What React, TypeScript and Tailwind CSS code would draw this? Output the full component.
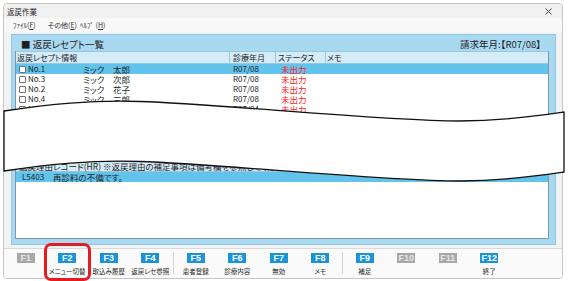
import React from "react";

type Row = { no: string; sei: string; mei: string; ym: string; st: string; sel?: boolean };

const rows: Row[] = [
  { no: "No.1", sei: "ミック", mei: "太郎", ym: "R07/08", st: "未出力", sel: true },
  { no: "No.3", sei: "ミック", mei: "次郎", ym: "R07/08", st: "未出力" },
  { no: "No.2", sei: "ミック", mei: "花子", ym: "R07/08", st: "未出力" },
  { no: "No.4", sei: "ミック", mei: "三郎", ym: "R07/08", st: "未出力" },
  { no: "No.5", sei: "ミック", mei: "四郎", ym: "R07/04", st: "未出力" },
  { no: "No.6", sei: "ミック", mei: "五郎", ym: "R07/04", st: "未出力" },
  { no: "No.7", sei: "ミック", mei: "六郎", ym: "R07/04", st: "未出力" },
  { no: "No.8", sei: "ミック", mei: "七郎", ym: "R07/04", st: "未出力" },
  { no: "No.9", sei: "ミック", mei: "八郎", ym: "R07/04", st: "未出力" },
];

type Key = { k: string; label?: string; on: boolean } | "sep1" | "sep2";

const keys: Key[] = [
  { k: "F1", on: false },
  { k: "F2", label: "メニュー切替", on: true },
  { k: "F3", label: "取込み履歴", on: true },
  { k: "F4", label: "返戻レセ参照", on: true },
  "sep1",
  { k: "F5", label: "患者登録", on: true },
  { k: "F6", label: "診療内容", on: true },
  { k: "F7", label: "無効", on: true },
  { k: "F8", label: "メモ", on: true },
  "sep2",
  { k: "F9", label: "補足", on: true },
  { k: "F10", on: false },
  { k: "F11", on: false },
  { k: "F12", label: "終了", on: true },
];

function Check() {
  return <div className="w-[7px] h-[7px] shrink-0 border border-[#707070] bg-white rounded-[1px]" />;
}

export default function App() {
  return (
    <div className="relative w-[568px] h-[281px] overflow-hidden bg-white font-['Noto_Sans_CJK_JP','Noto_Sans',sans-serif] [font-feature-settings:'palt'] text-[#1e1e1e]">
      <div className="ml-[3px] mt-[3px] w-[560px] h-[276px] border border-[#c6c6c6] rounded-[4px] bg-[#f2f3f4] flex flex-col overflow-hidden">
        {/* title bar */}
        <div className="h-[14px] flex items-center justify-between pl-[3px] pr-[10px] bg-[#f0f0f0]">
          <span className="text-[7.5px] leading-none pt-[1px]">返戻作業</span>
          <svg width="7" height="7" viewBox="0 0 7 7">
            <path d="M0.5 0.5L6.5 6.5M6.5 0.5L0.5 6.5" stroke="#333" strokeWidth="0.9" />
          </svg>
        </div>
        {/* menu bar */}
        <div className="h-[14px] flex items-center pl-[9px] text-[7px] leading-none bg-[#f8f8f8] text-[#333]">
          <span className="w-[35px]">ﾌｧｲﾙ(<span className="underline">F</span>)</span>
          <span className="w-[32px]">その他(<span className="underline">E</span>)</span>
          <span>ﾍﾙﾌﾟ (<span className="underline">H</span>)</span>
        </div>
        {/* blue panel */}
        <div className="ml-[7px] mt-[2px] w-[545px] h-[211px] border border-[#8fc7e4] bg-[#a9d9f1] flex flex-col">
          <div className="h-[16px] flex items-end justify-between pl-[9px] pr-[14px] pb-[1px]">
            <span className="text-[9.5px] leading-[12px]">■ 返戻レセプト一覧</span>
            <span className="text-[9.5px] leading-[12px]">請求年月:【R07/08】</span>
          </div>
          {/* upper list */}
          <div className="ml-[3px] mr-[6px] h-[103px] bg-white border-x border-[#7f96a6] flex flex-col overflow-hidden">
            <div className="h-[13px] shrink-0 flex bg-[#d4ebf8] border-y border-[#98c7e2] text-[8px] leading-none">
              <div className="w-[213px] pl-[1px] flex items-center">返戻レセプト情報</div>
              <div className="w-[46px] pl-[3px] flex items-center border-l border-[#98c7e2]">診療年月</div>
              <div className="w-[50px] pl-[2px] flex items-center border-l border-[#98c7e2]">ステータス</div>
              <div className="flex-1 pl-[1px] flex items-center border-l border-[#98c7e2]">メモ</div>
            </div>
            {rows.map((r) => (
              <div
                key={r.no}
                className={`h-[10px] shrink-0 flex items-center text-[8.5px] leading-none ${r.sel ? "bg-[#62c3ec]" : ""}`}
              >
                <div className="w-[213px] pl-[3px] flex items-center">
                  <Check />
                  <span className="ml-[2px] w-[55px] text-[8px]">{r.no}</span>
                  <span className="w-[30px]">{r.sei}</span>
                  <span>{r.mei}</span>
                </div>
                <div className="w-[46px] pl-[4px] text-[8px]">{r.ym}</div>
                <div className="w-[50px] pl-[6px] text-[#ff2020]">{r.st}</div>
                <div className="flex-1" />
              </div>
            ))}
          </div>
          {/* lower list */}
          <div className="mt-[7px] ml-[3px] mr-[6px] h-[78px] bg-white border border-[#7f96a6] flex flex-col overflow-hidden">
            <div className="h-[10px] shrink-0 flex items-center pl-[3px] bg-[#d4ebf8] border-b border-[#98c7e2] text-[8.5px] leading-none whitespace-nowrap">
              返戻理由レコード(HR) ※返戻理由の補足事項は備考欄を参照してください。
            </div>
            <div className="h-[10px] shrink-0 flex items-center pl-[6px] bg-[#62c3ec] text-[8.5px] leading-none">
              <span className="w-[31px] text-[8px]">L5403</span>
              <span>再診料の不備です。</span>
            </div>
          </div>
        </div>
        {/* function key bar */}
        <div className="mt-[3px] flex-1 bg-[#fafafa] border-t border-[#d9d9d9] flex pl-[1px] pt-[4px]">
          {keys.map((key, i) => {
            if (key === "sep1" || key === "sep2") {
              return (
                <div key={i} className={`${key === "sep1" ? "w-[4px]" : "w-[3px]"} flex justify-center`}>
                  <div className="w-px h-[22px] -mt-[1px] bg-[#d2d2d2]" />
                </div>
              );
            }
            return (
              <div key={i} className="w-[41.5px] flex flex-col items-center">
                <div
                  className={`w-[18px] h-[10px] flex items-center justify-center text-[9px] font-bold leading-none font-['Liberation_Sans',sans-serif] ${
                    key.on ? "bg-[#1b93d7] text-white" : "bg-[#a8a8a8] text-[#e6e6e6]"
                  }`}
                >
                  {key.k}
                </div>
                {key.label && (
                  <div className="mt-[4px] text-[6.5px] leading-[8px] whitespace-nowrap text-[#2a2a2a]">{key.label}</div>
                )}
              </div>
            );
          })}
        </div>
      </div>

      {/* tear overlay */}
      <svg className="absolute left-0 top-0 pointer-events-none" width="568" height="281" viewBox="0 0 568 281">
        <path
          d="M4,111 C50,104 90,100 140,101.5 C220,104 380,121 459,121 C500,121 535,116 564,112 L564,172 C535,176 500,181 459,181 C380,181 220,164 140,161.5 C90,160 50,164 4,171 Z"
          fill="#ffffff"
          stroke="#111111"
          strokeWidth="1.3"
          strokeLinejoin="round"
        />
      </svg>

      {/* red highlight */}
      <div className="absolute left-[44px] top-[243px] w-[47px] h-[38px] border-[3px] border-[#e31b23] rounded-[7px]" />
    </div>
  );
}
